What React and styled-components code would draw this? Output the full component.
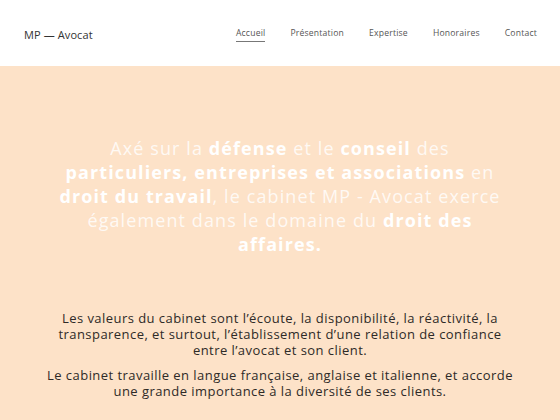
import React from "react";
import styled, { createGlobalStyle } from "styled-components";

const Global = createGlobalStyle`
  html, body { margin: 0; padding: 0; }
  body { background: #fde2c8; font-family: "Open Sans", "Noto Sans", sans-serif; }
`;

const Header = styled.header`
  height: 66px;
  background: #ffffff;
  display: flex;
  align-items: center;
  justify-content: space-between;
  padding: 2px 23px 0 24px;
  box-sizing: border-box;
`;

const Brand = styled.div`
  font-size: 11px;
  color: #333333;
  letter-spacing: 0.1px;
`;

const Nav = styled.nav`
  display: flex;
  gap: 25px;
`;

const NavLink = styled.a`
  font-size: 8.6px;
  color: #555555;
  letter-spacing: 0.2px;
  text-decoration: none;
  padding-bottom: 2px;
  border-bottom: 1px solid ${(p) => (p.$active ? "#777777" : "transparent")};
`;

const Main = styled.main`
  background: #fde2c8;
  padding: 70px 40px 20px;
  display: flex;
  flex-direction: column;
  align-items: center;
`;

const Hero = styled.h1`
  margin: 0;
  max-width: 460px;
  text-align: center;
  font-size: 18px;
  line-height: 24px;
  letter-spacing: 1.1px;
  font-weight: 400;
  color: rgba(255, 255, 255, 0.82);
  b { font-weight: 700; color: #ffffff; }
`;

const Body = styled.div`
  margin-top: 54px;
  max-width: 480px;
  text-align: center;
  color: #2e2a27;
  font-size: 13px;
  line-height: 16px;
  letter-spacing: 0.45px;
`;

const P = styled.p`
  margin: 0 0 9px;
`;

export default function App() {
  const links = ["Accueil", "Présentation", "Expertise", "Honoraires", "Contact"];
  return (
    <>
      <Global />
      <Header>
        <Brand>MP — Avocat</Brand>
        <Nav>
          {links.map((l, i) => (
            <NavLink key={l} href="#" $active={i === 0}>{l}</NavLink>
          ))}
        </Nav>
      </Header>
      <Main>
        <Hero>
          Axé sur la <b>défense</b> et le <b>conseil</b> des <b>particuliers, entreprises et associations</b> en <b>droit du travail</b>, le cabinet MP - Avocat exerce également dans le domaine du <b>droit des affaires.</b>
        </Hero>
        <Body>
          <P>Les valeurs du cabinet sont l’écoute, la disponibilité, la réactivité, la transparence, et surtout, l’établissement d’une relation de confiance entre l’avocat et son client.</P>
          <P>Le cabinet travaille en langue française, anglaise et italienne, et accorde une grande importance à la diversité de ses clients.</P>
        </Body>
      </Main>
    </>
  );
}
